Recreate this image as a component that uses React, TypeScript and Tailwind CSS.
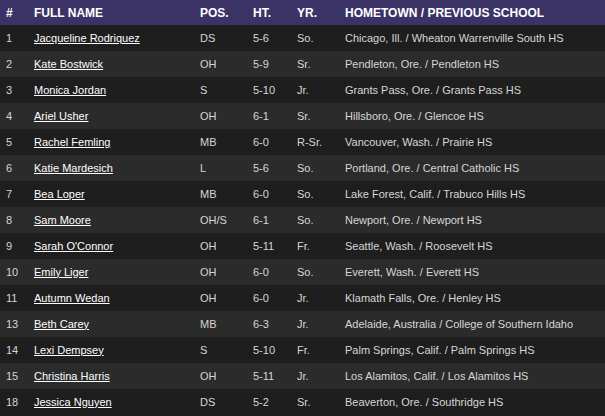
import React from 'react';

interface Player {
  num: string;
  name: string;
  pos: string;
  ht: string;
  yr: string;
  hometown: string;
}

const roster: Player[] = [
  { num: '1', name: 'Jacqueline Rodriquez', pos: 'DS', ht: '5-6', yr: 'So.', hometown: 'Chicago, Ill. / Wheaton Warrenville South HS' },
  { num: '2', name: 'Kate Bostwick', pos: 'OH', ht: '5-9', yr: 'Sr.', hometown: 'Pendleton, Ore. / Pendleton HS' },
  { num: '3', name: 'Monica Jordan', pos: 'S', ht: '5-10', yr: 'Jr.', hometown: 'Grants Pass, Ore. / Grants Pass HS' },
  { num: '4', name: 'Ariel Usher', pos: 'OH', ht: '6-1', yr: 'Sr.', hometown: 'Hillsboro, Ore. / Glencoe HS' },
  { num: '5', name: 'Rachel Femling', pos: 'MB', ht: '6-0', yr: 'R-Sr.', hometown: 'Vancouver, Wash. / Prairie HS' },
  { num: '6', name: 'Katie Mardesich', pos: 'L', ht: '5-6', yr: 'So.', hometown: 'Portland, Ore. / Central Catholic HS' },
  { num: '7', name: 'Bea Loper', pos: 'MB', ht: '6-0', yr: 'So.', hometown: 'Lake Forest, Calif. / Trabuco Hills HS' },
  { num: '8', name: 'Sam Moore', pos: 'OH/S', ht: '6-1', yr: 'So.', hometown: 'Newport, Ore. / Newport HS' },
  { num: '9', name: "Sarah O'Connor", pos: 'OH', ht: '5-11', yr: 'Fr.', hometown: 'Seattle, Wash. / Roosevelt HS' },
  { num: '10', name: 'Emily Liger', pos: 'OH', ht: '6-0', yr: 'So.', hometown: 'Everett, Wash. / Everett HS' },
  { num: '11', name: 'Autumn Wedan', pos: 'OH', ht: '6-0', yr: 'Jr.', hometown: 'Klamath Falls, Ore. / Henley HS' },
  { num: '13', name: 'Beth Carey', pos: 'MB', ht: '6-3', yr: 'Jr.', hometown: 'Adelaide, Australia / College of Southern Idaho' },
  { num: '14', name: 'Lexi Dempsey', pos: 'S', ht: '5-10', yr: 'Fr.', hometown: 'Palm Springs, Calif. / Palm Springs HS' },
  { num: '15', name: 'Christina Harris', pos: 'OH', ht: '5-11', yr: 'Jr.', hometown: 'Los Alamitos, Calif. / Los Alamitos HS' },
  { num: '18', name: 'Jessica Nguyen', pos: 'DS', ht: '5-2', yr: 'Sr.', hometown: 'Beaverton, Ore. / Southridge HS' },
];

const App: React.FC = () => {
  return (
    <div className="w-[605px] h-[416px] overflow-hidden bg-[#1e1e1e] font-['Liberation_Sans',Arial,sans-serif]">
      <table className="w-full border-collapse table-fixed text-[11px] text-[#d6d6d6]">
        <colgroup>
          <col className="w-[34px]" />
          <col className="w-[166px]" />
          <col className="w-[53px]" />
          <col className="w-[44px]" />
          <col className="w-[48px]" />
          <col />
        </colgroup>
        <thead>
          <tr className="h-[25px] bg-[#3b3366] text-white text-left text-[12px] font-bold">
            <th className="pl-[6px]">#</th>
            <th>FULL NAME</th>
            <th>POS.</th>
            <th>HT.</th>
            <th>YR.</th>
            <th>HOMETOWN / PREVIOUS SCHOOL</th>
          </tr>
        </thead>
        <tbody>
          {roster.map((p, i) => (
            <tr key={p.num} className={`h-[26px] ${i % 2 === 0 ? 'bg-[#1e1e1e]' : 'bg-[#2b2b2b]'}`}>
              <td className="pl-[6px]">{p.num}</td>
              <td>
                <a href="#" className="text-white underline">{p.name}</a>
              </td>
              <td>{p.pos}</td>
              <td>{p.ht}</td>
              <td>{p.yr}</td>
              <td className="whitespace-nowrap">{p.hometown}</td>
            </tr>
          ))}
        </tbody>
      </table>
    </div>
  );
};

export default App;
